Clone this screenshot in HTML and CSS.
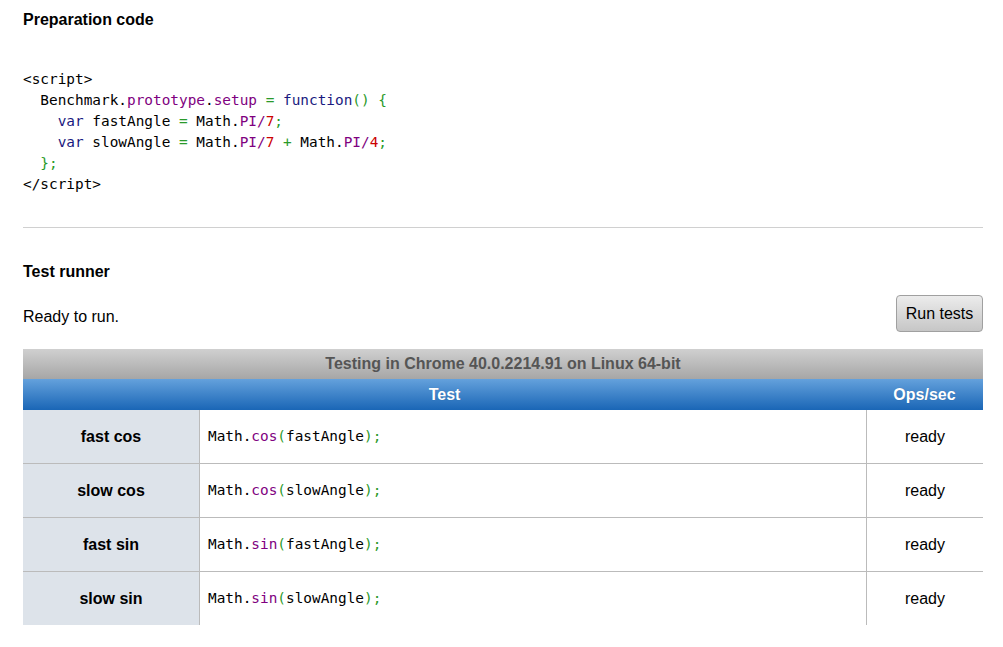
FILE: index.html
```html
<!DOCTYPE html>
<html>
<head>
<meta charset="utf-8">
<title>Benchmark</title>
<link rel="stylesheet" href="styles.css">
</head>
<body>
<div class="page">
  <h2 class="title prep-title">Preparation code</h2>
  <pre class="code prep-code"><span class="pl">&lt;</span><span class="tg">script</span><span class="pl">&gt;</span>
  Benchmark<span class="pl">.</span><span class="ty">prototype</span><span class="pl">.</span><span class="ty">setup</span> <span class="pn">=</span> <span class="kw">function</span><span class="pn">()</span> <span class="pn">{</span>
    <span class="kw">var</span> fastAngle <span class="pn">=</span> Math<span class="pl">.</span><span class="ty">PI</span><span class="ty">/</span><span class="nm">7</span><span class="pn">;</span>
    <span class="kw">var</span> slowAngle <span class="pn">=</span> Math<span class="pl">.</span><span class="ty">PI</span><span class="ty">/</span><span class="nm">7</span> <span class="pn">+</span> Math<span class="pl">.</span><span class="ty">PI</span><span class="ty">/</span><span class="nm">4</span><span class="pn">;</span>
  <span class="pn">};</span>
<span class="pl">&lt;/</span><span class="tg">script</span><span class="pl">&gt;</span></pre>
  <hr class="divider">
  <h2 class="title runner-title">Test runner</h2>
  <div class="runner-bar">
    <p class="status">Ready to run.</p>
    <button class="run-btn" type="button">Run tests</button>
  </div>
  <table class="results">
    <caption class="results-caption">Testing in Chrome 40.0.2214.91 on Linux 64-bit</caption>
    <thead>
      <tr>
        <th colspan="2" class="th-test">Test</th>
        <th class="th-ops">Ops/sec</th>
      </tr>
    </thead>
    <tbody>
      <tr>
        <th class="name">fast cos</th>
        <td class="code-cell"><code class="code">Math<span class="pl">.</span><span class="ty">cos</span><span class="pn">(</span>fastAngle<span class="pn">);</span></code></td>
        <td class="result">ready</td>
      </tr>
      <tr class="sep">
        <th class="name">slow cos</th>
        <td class="code-cell"><code class="code">Math<span class="pl">.</span><span class="ty">cos</span><span class="pn">(</span>slowAngle<span class="pn">);</span></code></td>
        <td class="result">ready</td>
      </tr>
      <tr class="sep">
        <th class="name">fast sin</th>
        <td class="code-cell"><code class="code">Math<span class="pl">.</span><span class="ty">sin</span><span class="pn">(</span>fastAngle<span class="pn">);</span></code></td>
        <td class="result">ready</td>
      </tr>
      <tr class="sep">
        <th class="name">slow sin</th>
        <td class="code-cell"><code class="code">Math<span class="pl">.</span><span class="ty">sin</span><span class="pn">(</span>slowAngle<span class="pn">);</span></code></td>
        <td class="result">ready</td>
      </tr>
    </tbody>
  </table>
</div>
</body>
</html>
```

FILE: styles.css
```css
html, body {
  margin: 0;
  padding: 0;
  background: #fff;
}

body {
  font-family: "Liberation Sans", Arial, sans-serif;
  font-size: 16px;
  color: #000;
}

.page {
  width: 960px;
  padding: 11px 20px 0 23px;
}

.title {
  font-size: 16px;
  font-weight: bold;
  line-height: 18px;
  margin: 0;
}

.prep-title {
  margin-bottom: 40px;
}

.code {
  font-family: "DejaVu Sans Mono", monospace;
  font-size: 14.4px;
  color: #000;
}

.prep-code {
  margin: 0;
  line-height: 21px;
}

.pl { color: #000; }
.tg { color: #000; }
.kw { color: #1a1a80; }
.ty { color: #800080; }
.pn { color: #2a9a2a; }
.nm { color: #cc0000; }

.divider {
  border: 0;
  border-top: 1px solid #d0d0d0;
  margin: 32px 0 0;
  height: 0;
}

.runner-title {
  margin-top: 35px;
}

.runner-bar {
  display: flex;
  justify-content: space-between;
  align-items: center;
  margin-top: 14px;
}

.status {
  margin: 0;
  line-height: 18px;
  padding-top: 6px;
}

.run-btn {
  font-family: "Liberation Sans", Arial, sans-serif;
  font-size: 16px;
  color: #000;
  height: 37px;
  width: 87px;
  padding: 0;
  border: 1px solid #a0a0a0;
  border-radius: 4px;
  background: linear-gradient(#ececec, #c6c6c6);
}

.results {
  width: 960px;
  margin-top: 17px;
  border-collapse: separate;
  border-spacing: 0;
}

.results-caption {
  height: 30px;
  line-height: 30px;
  font-weight: bold;
  color: #555;
  background: linear-gradient(#d0d0d0, #a6a6a6);
}

.results thead th {
  height: 31px;
  padding: 0;
  line-height: 31px;
  color: #fff;
  font-weight: bold;
  background: linear-gradient(#64a1dc, #1a66b6);
  text-shadow: 0 0 1px rgba(0, 0, 0, 0.2);
}

.th-ops {
  width: 117px;
}

.results tbody th,
.results tbody td {
  padding: 16px 0 17px;
  line-height: 19px;
  height: 19px;
}

.name {
  width: 176px;
  background: #dde3ea;
  font-weight: bold;
  text-align: center;
}

.code-cell {
  border-left: 1px solid #bbb;
  padding-left: 8px !important;
  text-align: left;
}

.result {
  width: 116px;
  border-left: 1px solid #bbb;
  text-align: center;
}

.sep th,
.sep td {
  border-top: 1px solid #bbb;
}
```
